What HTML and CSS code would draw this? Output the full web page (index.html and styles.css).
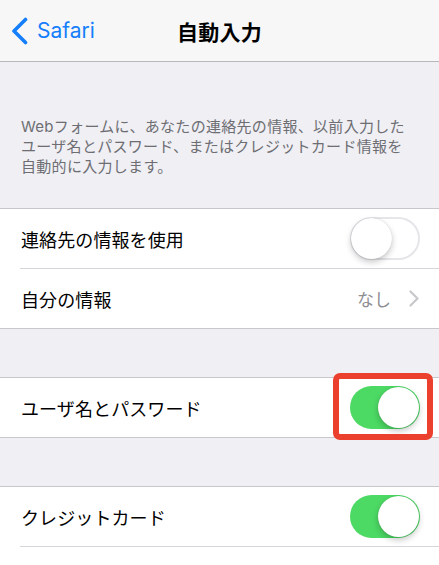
FILE: index.html
```html
<!DOCTYPE html>
<html lang="ja">
<head>
<meta charset="utf-8">
<link rel="stylesheet" href="styles.css">
</head>
<body>
<header class="nav">
  <div class="back">
    <svg class="back-icon" width="17" height="28" viewBox="0 0 17 28"><path d="M14.5 2.5 L3 14 L14.5 25.5" fill="none" stroke="#157efb" stroke-width="3.6" stroke-linecap="round" stroke-linejoin="round"/></svg>
    <span class="back-label">Safari</span>
  </div>
  <div class="title">自動入力</div>
  <div></div>
</header>
<p class="desc">Webフォームに、あなたの連絡先の情報、以前入力した<br>ユーザ名とパスワード、またはクレジットカード情報を<br>自動的に入力します。</p>
<section class="group">
  <div class="row">
    <span class="label">連絡先の情報を使用</span>
    <span class="switch off"><span class="knob"></span></span>
  </div>
  <div class="row">
    <span class="label">自分の情報</span>
    <span class="detail">なし
      <svg class="chev" width="10" height="17" viewBox="0 0 10 17"><path d="M1.5 1.5 L8.5 8.5 L1.5 15.5" fill="none" stroke="#c7c7cc" stroke-width="2.2" stroke-linecap="round" stroke-linejoin="round"/></svg>
    </span>
  </div>
</section>
<section class="group">
  <div class="row">
    <span class="label">ユーザ名とパスワード</span>
    <span class="switch on highlighted"><span class="knob"></span><span class="mark"></span></span>
  </div>
</section>
<section class="group">
  <div class="row">
    <span class="label">クレジットカード</span>
    <span class="switch on"><span class="knob"></span></span>
  </div>
  <div class="row"></div>
</section>
</body>
</html>
```
FILE: styles.css
```css
html, body {
  margin: 0;
  padding: 0;
}
body {
  background: #efeff4;
  font-family: "Inter", "Noto Sans CJK JP", sans-serif;
  color: #000;
  width: 439px;
  overflow: hidden;
}
.nav {
  height: 61px;
  background: #f7f7f8;
  border-bottom: 1px solid #b8b8bc;
  display: grid;
  grid-template-columns: 1fr auto 1fr;
  align-items: center;
}
.back {
  display: flex;
  align-items: center;
  padding-left: 11px;
  gap: 9px;
}
.back-icon {
  display: block;
}
.back-label {
  color: #157efb;
  font-size: 21px;
  line-height: 28px;
}
.title {
  font-weight: 700;
  font-size: 21px;
  letter-spacing: 0.3px;
  padding-top: 1px;
}
.desc {
  margin: 0;
  padding: 55px 0 31px 21px;
  font-size: 15px;
  line-height: 20px;
  letter-spacing: 0.3px;
  color: #6d6d72;
}
.group {
  background: #fff;
  border-top: 1px solid #c8c7cc;
  border-bottom: 1px solid #c8c7cc;
  margin-bottom: 48px;
}
.row {
  height: 59px;
  margin-left: 20px;
  padding-left: 1px;
  padding-right: 19px;
  display: flex;
  align-items: center;
  justify-content: space-between;
  border-bottom: 1px solid #d6d5da;
}
.row:last-child {
  border-bottom: none;
}
.group:last-child .row:first-child {
  border-bottom: 1px solid #d6d5da;
}
.label {
  font-size: 18px;
  letter-spacing: 0.1px;
}
.detail {
  display: flex;
  align-items: center;
  gap: 18px;
  font-size: 17px;
  color: #8e8e93;
  padding-right: 1px;
}
.chev {
  display: block;
}
.switch {
  position: relative;
  width: 70px;
  height: 43px;
  border-radius: 22px;
  box-sizing: border-box;
  flex: none;
}
.switch.off {
  background: #fff;
  border: 2px solid #e5e5ea;
}
.switch.on {
  background: #4cd964;
}
.knob {
  position: absolute;
  width: 41px;
  height: 41px;
  border-radius: 50%;
  background: #fff;
  box-shadow: 0 3px 6px rgba(0,0,0,0.22), 0 0 1px rgba(0,0,0,0.2);
}
.switch.off .knob {
  left: -1px;
  top: -1px;
}
.switch.on .knob {
  right: 1px;
  top: 1px;
}
.mark {
  position: absolute;
  left: -17px;
  right: -13px;
  top: -13px;
  bottom: -11px;
  border: 6px solid #eb402d;
  border-radius: 7px;
  pointer-events: none;
}
```
